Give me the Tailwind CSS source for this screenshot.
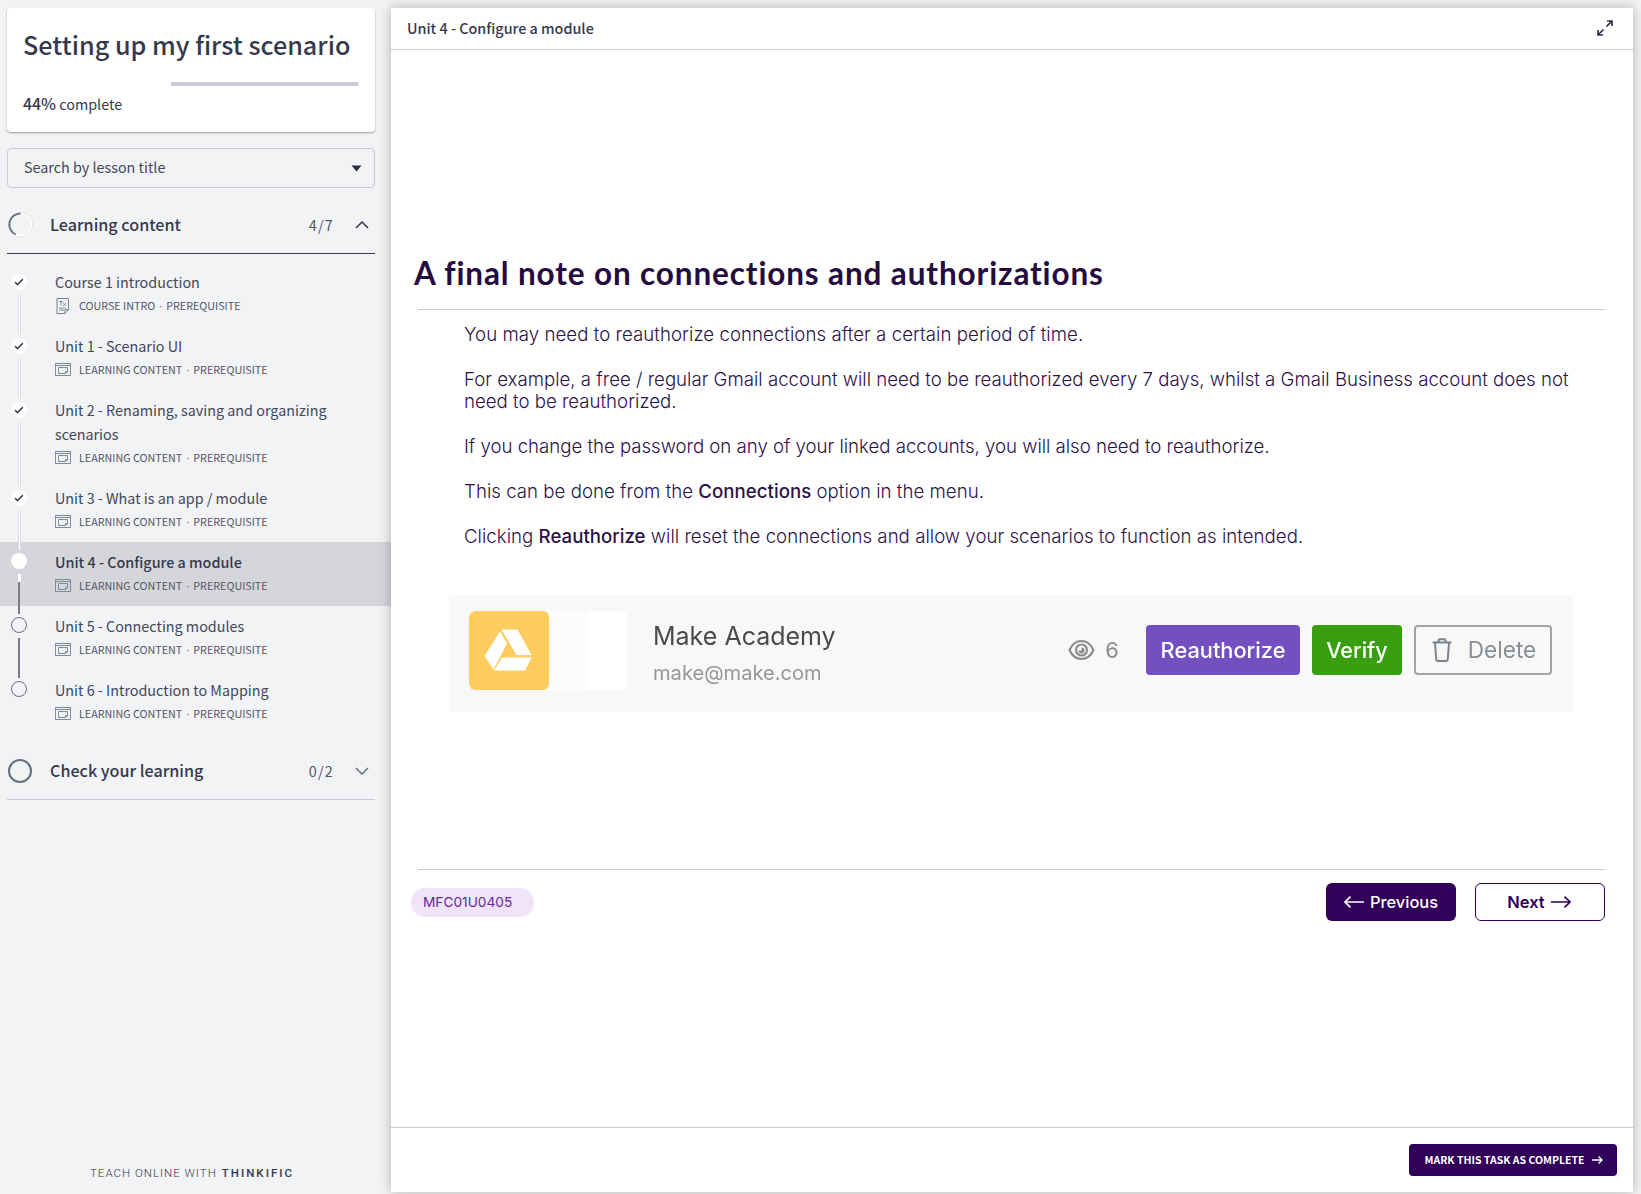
<!DOCTYPE html>
<html lang="en">
<head>
<meta charset="utf-8">
<title>Setting up my first scenario</title>
<script src="https://cdn.jsdelivr.net/npm/@tailwindcss/browser@4"></script>
</head>
<body class="flex h-[1194px] w-[1641px] overflow-hidden bg-[#f1f3f5] font-['Noto_Sans_CJK_SC',sans-serif] text-[14.35px] text-[#36394d]">

<svg class="hidden">
  <symbol id="module" viewBox="0 0 16 13"><g fill="none" stroke="#85879a" stroke-width="1"><path d="M.5.5h15v12H.5zM.5 2.500h15"/><path d="M3.500 4.500h9v4l-2 2h-7zM12.500 8.500h-2v2"/></g></symbol>
  <symbol id="check" viewBox="0 0 10 8"><path d="M1 4.300 3.500 6.600 8.800 1.200" fill="none" stroke="#2a2c3b" stroke-width="1.400"/></symbol>
</svg>

<aside class="flex w-[391px] shrink-0 flex-col pt-2">
  <section class="ml-[7px] flex h-[124px] w-[368px] flex-col rounded bg-white pr-4 pl-4 pt-5 shadow-[0_1px_2px_rgba(0,0,0,0.35)]">
    <h1 class="text-[25.2px] leading-8 font-medium whitespace-nowrap">Setting up my first scenario</h1>
    <div class="mt-[22px] flex h-1 justify-end"><div class="w-[188px] rounded-r-full bg-[#c9cad6]"></div></div>
    <p class="mt-2 leading-5 whitespace-nowrap"><span class="text-[15.9px] font-medium">44%</span> complete</p>
  </section>

  <div class="mt-4 ml-[7px] flex h-10 w-[368px] items-center justify-between rounded border border-[#c9cad6] pr-3 pl-4">
    <span class="-mt-0.5 leading-5 text-[#43465a]">Search by lesson title</span>
    <svg class="h-[7px] w-[11px]" viewBox="0 0 11 7"><path d="M.5.500h10L5.500 6.500z" fill="#2a2c45"/></svg>
  </div>

  <div class="ml-[7px] flex h-[66px] w-[368px] items-center border-b border-[#36394d] pt-[7px]">
    <svg class="mt-px ml-px h-[25px] w-[25px]" viewBox="0 0 26 26" fill="none"><circle cx="13" cy="13" r="12" stroke="#b3b4c2" stroke-width=".9" stroke-dasharray="2 2"/><circle cx="13" cy="13" r="11.300" stroke="#fff" stroke-width="1.500"/><path d="M13 1.500A11.500 11.500 0 0 0 8 23.400" stroke="#6b6d80" stroke-width="2"/></svg>
    <h2 class="ml-[17px] flex-1 text-[16.15px] leading-6 font-medium">Learning content</h2>
    <span class="mt-px mr-[21px] tracking-[1.2px] text-[#54566a]">4/7</span>
    <svg class="mt-px mr-[6px] h-2 w-[14px]" viewBox="0 0 14 8"><path d="M1 7 7 1l6 6" fill="none" stroke="#36394d" stroke-width="1.500"/></svg>
  </div>

  <ul class="mt-2 flex flex-col text-[#43465a]">
    <li class="flex h-16 pl-[11px]">
      <div class="relative z-10 flex w-4 flex-col items-center pt-3">
        <div class="flex h-4 w-4 shrink-0 items-center justify-center rounded-full bg-white"><svg class="h-2 w-2.5"><use href="#check"/></svg></div>
        <div class="mt-1 -mb-2 w-[3px] flex-1 border-x border-[#dcdde2] bg-white"></div>
      </div>
      <div class="ml-7 flex flex-col pt-2">
        <div class="leading-6">Course 1 introduction</div>
        <div class="flex h-6 items-center text-[10.75px] leading-6 text-[#54566a]">
          <svg class="mr-[9px] ml-[1px] h-4 w-[14px]" viewBox="0 0 14 16" fill="none" stroke="#7d7f90"><path d="M1 .5h11.500v11l-3.500 4H1zM12.500 11.500H9v4"/><path d="M3 3.500h4M5 3.500v4M7 5l3 3M10 5 7 8M3 10h7M3 12h5" stroke-width=".9"/></svg>
          COURSE INTRO<span class="w-[11px] text-center font-['Liberation_Sans']">·</span>PREREQUISITE</div>
      </div>
    </li>
    <li class="flex h-16 pl-[11px]">
      <div class="relative z-10 flex w-4 flex-col items-center pt-3">
        <div class="flex h-4 w-4 shrink-0 items-center justify-center rounded-full bg-white"><svg class="h-2 w-2.5"><use href="#check"/></svg></div>
        <div class="mt-1 -mb-2 w-[3px] flex-1 border-x border-[#dcdde2] bg-white"></div>
      </div>
      <div class="ml-7 flex flex-col pt-2">
        <div class="leading-6">Unit 1 - Scenario UI</div>
        <div class="flex h-6 items-center text-[10.75px] leading-6 text-[#54566a]"><svg class="-mt-px mr-2 h-[13px] w-4"><use href="#module"/></svg>LEARNING CONTENT<span class="w-[11px] text-center font-['Liberation_Sans']">·</span>PREREQUISITE</div>
      </div>
    </li>
    <li class="flex h-[88px] pl-[11px]">
      <div class="relative z-10 flex w-4 flex-col items-center pt-3">
        <div class="flex h-4 w-4 shrink-0 items-center justify-center rounded-full bg-white"><svg class="h-2 w-2.5"><use href="#check"/></svg></div>
        <div class="mt-1 -mb-2 w-[3px] flex-1 border-x border-[#dcdde2] bg-white"></div>
      </div>
      <div class="ml-7 flex flex-col pt-2">
        <div class="leading-6">Unit 2 - Renaming, saving and organizing<br>scenarios</div>
        <div class="flex h-6 items-center text-[10.75px] leading-6 text-[#54566a]"><svg class="-mt-px mr-2 h-[13px] w-4"><use href="#module"/></svg>LEARNING CONTENT<span class="w-[11px] text-center font-['Liberation_Sans']">·</span>PREREQUISITE</div>
      </div>
    </li>
    <li class="flex h-16 pl-[11px]">
      <div class="relative z-10 flex w-4 flex-col items-center pt-3">
        <div class="flex h-4 w-4 shrink-0 items-center justify-center rounded-full bg-white"><svg class="h-2 w-2.5"><use href="#check"/></svg></div>
        <div class="mt-1 -mb-2 w-[3px] flex-1 border-x border-[#dcdde2] bg-white"></div>
      </div>
      <div class="ml-7 flex flex-col pt-2">
        <div class="leading-6">Unit 3 - What is an app / module</div>
        <div class="flex h-6 items-center text-[10.75px] leading-6 text-[#54566a]"><svg class="-mt-px mr-2 h-[13px] w-4"><use href="#module"/></svg>LEARNING CONTENT<span class="w-[11px] text-center font-['Liberation_Sans']">·</span>PREREQUISITE</div>
      </div>
    </li>
    <li class="flex h-16 bg-[#d5d6da] pl-[11px]">
      <div class="relative z-10 flex w-4 flex-col items-center pt-[11px]">
        <div class="h-4 w-4 shrink-0 rounded-full bg-white"></div>
        <div class="mt-[5px] h-2 w-[3px] bg-white"></div>
        <div class="-mb-2 w-0.5 flex-1 bg-[#7a7c8d]"></div>
      </div>
      <div class="ml-7 flex flex-col pt-2">
        <div class="leading-6 font-medium text-[#36394d]">Unit 4 - Configure a module</div>
        <div class="flex h-6 items-center text-[10.75px] leading-6 text-[#54566a]"><svg class="-mt-px mr-2 h-[13px] w-4"><use href="#module"/></svg>LEARNING CONTENT<span class="w-[11px] text-center font-['Liberation_Sans']">·</span>PREREQUISITE</div>
      </div>
    </li>
    <li class="flex h-16 pl-[11px]">
      <div class="relative z-10 flex w-4 flex-col items-center pt-[11px]">
        <div class="h-4 w-4 shrink-0 rounded-full border border-[#6b6d80]"></div>
        <div class="mt-[5px] -mb-2 w-0.5 flex-1 bg-[#7a7c8d]"></div>
      </div>
      <div class="ml-7 flex flex-col pt-2">
        <div class="leading-6">Unit 5 - Connecting modules</div>
        <div class="flex h-6 items-center text-[10.75px] leading-6 text-[#54566a]"><svg class="-mt-px mr-2 h-[13px] w-4"><use href="#module"/></svg>LEARNING CONTENT<span class="w-[11px] text-center font-['Liberation_Sans']">·</span>PREREQUISITE</div>
      </div>
    </li>
    <li class="flex h-16 pl-[11px]">
      <div class="flex w-4 flex-col items-center pt-[11px]">
        <div class="h-4 w-4 shrink-0 rounded-full border border-[#6b6d80]"></div>
      </div>
      <div class="ml-7 flex flex-col pt-2">
        <div class="leading-6">Unit 6 - Introduction to Mapping</div>
        <div class="flex h-6 items-center text-[10.75px] leading-6 text-[#54566a]"><svg class="-mt-px mr-2 h-[13px] w-4"><use href="#module"/></svg>LEARNING CONTENT<span class="w-[11px] text-center font-['Liberation_Sans']">·</span>PREREQUISITE</div>
      </div>
    </li>
  </ul>

  <div class="mt-[9px] ml-[7px] flex h-[57px] w-[368px] items-center border-b border-[#c6c7cf]">
    <div class="ml-[1px] h-6 w-6 rounded-full border-2 border-[#6b6d80]"></div>
    <h2 class="-mt-0.5 ml-[18px] flex-1 text-[16.15px] leading-6 font-medium">Check your learning</h2>
    <span class="mr-[21px] tracking-[1.2px] text-[#54566a]">0/2</span>
    <svg class="mr-[6px] h-2 w-[14px]" viewBox="0 0 14 8"><path d="m1 1 6 6 6-6" fill="none" stroke="#6b6d80" stroke-width="1.500"/></svg>
  </div>

  <footer class="mt-auto mb-[11px] ml-[90px] flex items-center gap-[5px] font-[Roboto] text-[11.5px] leading-5 text-[#36394d]">
    <span class="font-light tracking-[1px]">TEACH ONLINE WITH</span><span class="font-medium tracking-[2px]">THINKIFIC</span>
  </footer>
</aside>

<main class="relative z-20 mt-2 mr-2 mb-0.5 flex flex-1 flex-col bg-white shadow-[0_0_12px_rgba(0,0,0,0.28)]">
  <header class="flex h-[42px] shrink-0 items-center justify-between border-b border-[#c9cad2] pr-5 pl-4">
    <span class="-mt-0.5 font-medium">Unit 4 - Configure a module</span>
    <svg class="-mt-0.5 h-4 w-4" viewBox="0 0 16 16" fill="none" stroke="#2a2c45" stroke-width="1.600"><path d="M9.500 6.500 15 1M10 1h5v5M6.500 9.500 1 15M1 10v5h5"/></svg>
  </header>

  <article class="flex flex-1 flex-col font-[Inter] text-[#2d1248]">
    <h2 class="mt-[203px] ml-[23px] font-[Lato] text-[31.5px] leading-10 font-bold tracking-[0.87px] text-[#250b40]">A final note on connections and authorizations</h2>
    <div class="mr-7 ml-[27px] mt-4 h-px bg-[#cdc8cd]"></div>
    <div class="mt-[14px] ml-[73px] flex flex-col gap-[22.43px] text-[18.66px] leading-[22.43px] font-light whitespace-nowrap">
      <p class="tracking-[0.04px]">You may need to reauthorize connections after a certain period of time.</p>
      <p class="tracking-[-0.01px]">For example, a free / regular Gmail account will need to be reauthorized every 7 days, whilst a Gmail Business account does not<br>need to be reauthorized.</p>
      <p class="tracking-[-0.03px]">If you change the password on any of your linked accounts, you will also need to reauthorize.</p>
      <p class="tracking-[0.02px]">This can be done from the <b class="font-medium">Connections</b> option in the menu.</p>
      <p class="tracking-[0.015px]">Clicking <b class="font-medium">Reauthorize</b> will reset the connections and allow your scenarios to function as intended.</p>
    </div>

    <div class="mt-[47px] ml-[58px] flex h-[117px] w-[1124px] items-center bg-[#f8f8f8] pr-[21px] pb-[6px] pl-5">
      <div class="flex h-[79px] w-[158px] overflow-hidden rounded-md bg-white">
        <div class="flex w-[119px] bg-[#fcfcfc]">
          <div class="flex h-[79px] w-20 items-center justify-center rounded-md bg-[#ffcd5f]">
            <svg class="mr-0.5 -mt-px h-[42px] w-12" viewBox="0 0 48 42" fill="#fff"><path d="M17.500.500h16L47.500 26H32.500zM16 2.500 23 14.500 9.500 40.500.500 27zM18 28.500h29.500L41 41.500H10z"/></svg>
          </div>
        </div>
      </div>
      <div class="ml-[26px] flex flex-1 flex-col pt-2 blur-[0.4px]">
        <div class="text-[25px] leading-[37px] text-[#4a4a4a]">Make Academy</div>
        <div class="text-[20.1px] leading-[37px] text-[#979797]">make@make.com</div>
      </div>
      <div class="-mt-px flex items-center text-[22px] blur-[0.4px]">
        <svg class="h-[22px] w-[27px]" viewBox="0 0 27 22" fill="none" stroke="#8c8c8c" stroke-width="2.200"><path d="M1.500 11C4 5.500 8.500 2 13.500 2s9.500 3.500 12 9c-2.500 5.500-7 9-12 9s-9.500-3.500-12-9z"/><circle cx="13.500" cy="11" r="5.500"/><path d="M10.500 11.500a3 3 0 1 0 3-3v3z" fill="#8c8c8c" stroke="none"/></svg>
        <span class="mr-[27px] ml-[10px] text-[#8c8c8c]">6</span>
        <div class="mr-3 flex h-[50px] w-[154px] items-center justify-center rounded bg-[#734fc0] text-[21.8px] font-medium text-white">Reauthorize</div>
        <div class="mr-3 flex h-[50px] w-[90px] items-center justify-center rounded bg-[#3a9f10] text-[21.6px] font-medium text-white">Verify</div>
        <div class="flex h-[50px] w-[138px] items-center justify-center gap-4 rounded border-2 border-[#a0a5aa] pl-0.5 text-[22.6px] text-[#868d94]">
          <svg class="h-6 w-5" viewBox="0 0 20 24" fill="none" stroke="#7d848b" stroke-width="2"><path d="M.500 4.500h19M3 5l1.200 16q.1 2 2 2h7.600q1.900 0 2-2L17 5M6 4l1.200-2.800h5.600L14 4"/></svg>Delete
        </div>
      </div>
    </div>

    <div class="mr-7 ml-[27px] mt-[157px] h-px bg-[#cdc8cd]"></div>
    <div class="mt-[13px] mr-[28px] ml-5 flex items-center">
      <div class="flex h-[29px] w-[123px] items-center rounded-full bg-[#f0e4fb] pl-3 text-[13.7px] text-[#6a2799]">MFC01U0405</div>
      <div class="mr-[19px] ml-auto flex h-[38px] w-[130px] items-center justify-center gap-1.5 rounded-md bg-[#310059] text-[16.4px] font-medium text-white">
        <svg class="h-3 w-5" viewBox="0 0 20 12" fill="none" stroke="currentColor" stroke-width="1.600"><path d="M20 6H1M6.500.600 1 6l5.500 5.400"/></svg>Previous
      </div>
      <div class="flex h-[38px] w-[130px] items-center justify-center gap-1.5 rounded-md border border-[#310059] pr-0.5 text-[16.5px] font-semibold text-[#310059]">
        Next<svg class="h-3 w-5" viewBox="0 0 20 12" fill="none" stroke="currentColor" stroke-width="1.600"><path d="M0 6h19M13.500.600 19 6l-5.500 5.400"/></svg>
      </div>
    </div>
  </article>

  <footer class="flex h-[65px] shrink-0 items-center justify-end border-t border-[#c9cad2] pr-4">
    <div class="flex h-8 w-52 items-center justify-center gap-[7px] rounded bg-[#310059] pl-px text-[10.5px] font-bold whitespace-nowrap text-white">
      MARK THIS TASK AS COMPLETE<svg class="h-2 w-[11px]" viewBox="0 0 11 8" fill="none" stroke="currentColor" stroke-width="1.400"><path d="M0 4h10M6.500.500 10 4 6.500 7.500"/></svg>
    </div>
  </footer>
</main>
</body>
</html>
